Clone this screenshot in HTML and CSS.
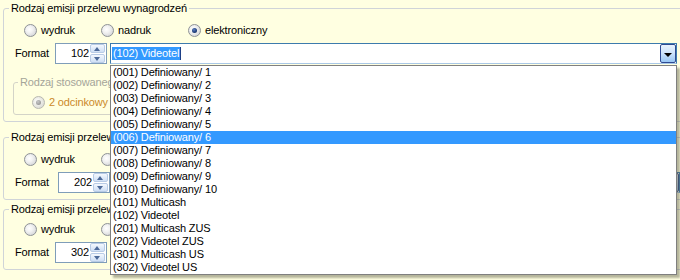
FILE: index.html
```html
<!DOCTYPE html>
<html>
<head>
<meta charset="utf-8">
<link rel="stylesheet" href="styles.css">
</head>
<body>
<div class="panel">
  <fieldset class="grp g1">
    <legend>Rodzaj emisji przelewu wynagrodzeń</legend>
    <div class="radios">
      <label class="rb w1"><span class="radio"></span>wydruk</label>
      <label class="rb w2"><span class="radio"></span>nadruk</label>
      <label class="rb"><span class="radio on"></span>elektroniczny</label>
    </div>
    <div class="fmt">
      <span class="flabel">Format</span>
      <div class="spin"><span class="val">102</span><span class="btns"><span class="sb up"></span><span class="sb dn"></span></span></div>
      <div class="combo"><span class="ctext"><span class="sel">(102) Videotel</span></span><span class="cbtn"></span></div>
    </div>
    <fieldset class="inner">
      <legend>Rodzaj stosowanego</legend>
      <label class="rb dis"><span class="radio on"></span>2 odcinkowy</label>
    </fieldset>
  </fieldset>

  <fieldset class="grp g2">
    <legend>Rodzaj emisji przelew</legend>
    <div class="radios">
      <label class="rb w1"><span class="radio"></span>wydruk</label>
      <span class="rb w2"><span class="radio"></span></span>
    </div>
    <div class="fmt">
      <span class="flabel wide">Format</span>
      <div class="spin"><span class="val">202</span><span class="btns"><span class="sb up"></span><span class="sb dn"></span></span></div>
      <div class="combo plain"><span class="ctext"></span><span class="cbtn"></span></div>
    </div>
  </fieldset>

  <fieldset class="grp g3">
    <legend>Rodzaj emisji przelew</legend>
    <div class="radios">
      <label class="rb w1"><span class="radio"></span>wydruk</label>
      <span class="rb w2"><span class="radio"></span></span>
    </div>
    <div class="fmt">
      <span class="flabel">Format</span>
      <div class="spin"><span class="val">302</span><span class="btns"><span class="sb up"></span><span class="sb dn"></span></span></div>
      <div class="combo plain"><span class="ctext"></span><span class="cbtn"></span></div>
    </div>
  </fieldset>
</div>

<ul class="list">
  <li>(001) Definiowany/ 1</li>
  <li>(002) Definiowany/ 2</li>
  <li>(003) Definiowany/ 3</li>
  <li>(004) Definiowany/ 4</li>
  <li>(005) Definiowany/ 5</li>
  <li class="hl">(006) Definiowany/ 6</li>
  <li>(007) Definiowany/ 7</li>
  <li>(008) Definiowany/ 8</li>
  <li>(009) Definiowany/ 9</li>
  <li>(010) Definiowany/ 10</li>
  <li>(101) Multicash</li>
  <li>(102) Videotel</li>
  <li>(201) Multicash ZUS</li>
  <li>(202) Videotel ZUS</li>
  <li>(301) Multicash US</li>
  <li>(302) Videotel US</li>
</ul>
</body>
</html>
```

FILE: styles.css
```css
* { box-sizing: border-box; }

html, body {
  margin: 0;
  padding: 0;
  width: 680px;
  height: 280px;
  overflow: hidden;
  background: #FFFFE1;
  font-family: "Liberation Sans", Arial, sans-serif;
  font-size: 11px;
  letter-spacing: -0.15px;
  color: #000;
}

.panel {
  padding-top: 1px;
  width: 720px;
}

.grp {
  margin: 0 0 0 3px;
  width: 710px;
  min-inline-size: 0;
  border: 1px solid #D0D4D8;
  border-radius: 3px;
  padding: 0 0 6px 9px;
}

.g2 { margin-top: 8px; }
.g3 { margin-top: 2px; }

legend {
  padding: 0 2px;
  margin-left: -4px;
  line-height: 14px;
  height: 14px;
  white-space: nowrap;
}

.radios {
  display: flex;
  align-items: center;
  height: 13px;
  margin-top: 9px;
  margin-left: 11px;
}
.g3 .radios { margin-top: 7px; }

.rb {
  display: flex;
  align-items: center;
  height: 13px;
  line-height: 13px;
  white-space: nowrap;
}
.rb.w1 { width: 77px; }
.rb.w2 { width: 87px; }

.radio {
  position: relative;
  width: 13px;
  height: 13px;
  border-radius: 50%;
  border: 1px solid #8E9296;
  background: radial-gradient(circle at 40% 40%, #FFFFFF 0%, #F2F2F2 35%, #C9CBCE 100%);
  margin-right: 4px;
  flex: none;
}
.radio.on::after {
  content: "";
  position: absolute;
  left: 3px;
  top: 3px;
  width: 5px;
  height: 5px;
  border-radius: 50%;
  background: radial-gradient(circle at 40% 35%, #5C7FC0 0%, #1E3C7A 60%, #10224A 100%);
}

.fmt {
  display: flex;
  align-items: center;
  height: 21px;
  margin-top: 6px;
}

.flabel {
  width: 40px;
  margin-left: 2px;
  line-height: 13px;
}
.flabel.wide { width: 43px; }

.spin {
  display: flex;
  align-items: center;
  width: 52px;
  height: 21px;
  border: 1px solid #7F9DB9;
  background: #fff;
  margin-right: 3px;
  padding: 1px 1px 1px 0;
  flex: none;
}
.val {
  flex: 1;
  text-align: right;
  padding-right: 1px;
  line-height: 13px;
}
.btns {
  display: flex;
  flex-direction: column;
  width: 15px;
  height: 19px;
  gap: 1px;
}
.sb {
  position: relative;
  flex: 1;
  border: 1px solid #B8CBE6;
  border-radius: 2px;
  background: linear-gradient(#F4F8FE, #CFDFF5);
}
.sb::after {
  content: "";
  position: absolute;
  left: 3px;
  top: 2px;
  border-left: 3.5px solid transparent;
  border-right: 3.5px solid transparent;
}
.sb.up::after { border-bottom: 4px solid #4D6A9A; }
.sb.dn::after { border-top: 4px solid #4D6A9A; }

.combo {
  display: flex;
  align-items: center;
  width: 567px;
  height: 21px;
  border: 1px solid #3D7BAD;
  border-bottom-color: #A9C8E6;
  background: #fff;
  flex: none;
}
.ctext {
  flex: 1;
  padding-left: 1px;
  line-height: 13px;
}
.sel {
  display: inline-block;
  background: #3399FF;
  color: #fff;
  padding: 0 1px 0 1px;
  border-right: 1px solid #1D3F86;
  line-height: 13px;
  height: 13px;
}
.cbtn {
  position: relative;
  width: 16px;
  height: 19px;
  border: 1px solid #2F4A92;
  border-radius: 2px;
  background: linear-gradient(#EAF3FE 0%, #CFE4FB 45%, #98C6F4 100%);
}
.cbtn::after {
  content: "";
  position: absolute;
  left: 3px;
  top: 8px;
  border-left: 4px solid transparent;
  border-right: 4px solid transparent;
  border-top: 4px solid #000;
}

.inner {
  margin: 11px 0 0 0;
  width: 220px;
  min-inline-size: 0;
  border: 1px solid #D4D4C8;
  border-radius: 3px;
  padding: 0 0 5px 8px;
}
.inner legend { color: #A5A59A; }

.rb.dis {
  margin-top: 7px;
  margin-left: 10px;
  color: #CC8A2A;
}
.rb.dis .radio {
  border-color: #B8B8B0;
  background: radial-gradient(circle at 40% 40%, #FFFFFF 0%, #EDEDE8 40%, #D2D2CC 100%);
}
.rb.dis .radio.on::after {
  background: radial-gradient(circle at 40% 35%, #C8C8C8 0%, #9A9A9A 70%);
}

.list {
  position: absolute;
  left: 110px;
  top: 65px;
  width: 567px;
  margin: 0;
  padding: 0;
  list-style: none;
  background: #fff;
  border: 1px solid #7F7F7F;
  border-top-color: #808080;
  box-shadow: 3px 3px 2px rgba(90, 90, 70, 0.45);
}
.list li {
  height: 13px;
  line-height: 13px;
  padding-left: 2px;
  white-space: nowrap;
}
.list li.hl {
  background: #3399FF;
  color: #fff;
}
```
